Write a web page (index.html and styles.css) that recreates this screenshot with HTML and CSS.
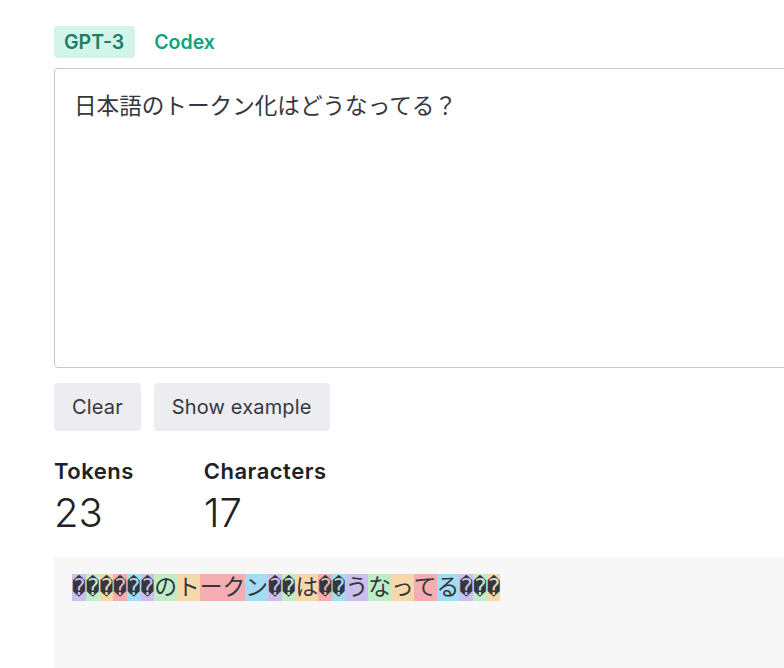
FILE: index.html
```html
<!DOCTYPE html>
<html lang="ja">
<head>
<meta charset="utf-8">
<title>Tokenizer</title>
<link rel="stylesheet" href="styles.css">
</head>
<body>
<div class="page">
  <div class="tabs">
    <span class="tab tab-active">GPT-3</span>
    <span class="tab">Codex</span>
  </div>
  <div class="input">日本語のトークン化はどうなってる？</div>
  <div class="actions">
    <button class="btn">Clear</button>
    <button class="btn">Show example</button>
  </div>
  <div class="stats">
    <div class="stat">
      <div class="stat-label">Tokens</div>
      <div class="stat-value">23</div>
    </div>
    <div class="stat">
      <div class="stat-label">Characters</div>
      <div class="stat-value">17</div>
    </div>
  </div>
  <div class="output"><span class="tk c0">�</span><span class="tk c1">�</span><span class="tk c2">�</span><span class="tk c3">�</span><span class="tk c4">�</span><span class="tk c0">�</span><span class="tk c1">の</span><span class="tk c2">ト</span><span class="tk c3">ーク</span><span class="tk c4">ン</span><span class="tk c0">�</span><span class="tk c1">�</span><span class="tk c2">は</span><span class="tk c3">�</span><span class="tk c4">�</span><span class="tk c0">う</span><span class="tk c1">な</span><span class="tk c2">っ</span><span class="tk c3">て</span><span class="tk c4">る</span><span class="tk c0">�</span><span class="tk c1">�</span><span class="tk c2">�</span></div>
</div>
</body>
</html>
```
FILE: styles.css
```css
html, body {
  margin: 0;
  padding: 0;
  background: #ffffff;
  overflow: hidden;
}
body {
  font-family: Inter, "Noto Sans CJK JP", sans-serif;
  color: #202123;
}
.page {
  padding: 26px 0 0 54px;
  width: 900px;
  height: 642px;
  overflow: hidden;
}
.tabs {
  display: flex;
  align-items: center;
  gap: 9px;
  height: 32px;
}
.tab {
  display: flex;
  align-items: center;
  height: 32px;
  padding: 0 11px 0 10px;
  border-radius: 4px;
  font-size: 19.5px;
  font-weight: 600;
  color: #10a37f;
}
.tab-active {
  background: #d2f4ea;
  color: #1a7f64;
}
.input {
  margin-top: 10px;
  box-sizing: border-box;
  height: 300px;
  border: 1px solid #c5c5d2;
  border-radius: 4px;
  padding: 21px 19px;
  font-family: "Noto Sans CJK JP", sans-serif;
  font-weight: 400;
  font-size: 22.6px;
  line-height: 30px;
  color: #353740;
}
.actions {
  display: flex;
  gap: 13px;
  margin-top: 15px;
}
.btn {
  height: 48px;
  padding: 0 18px;
  border: none;
  border-radius: 4px;
  background: #ececf1;
  color: #353740;
  font-family: Inter, sans-serif;
  font-size: 20px;
  font-weight: 400;
  letter-spacing: 0.15px;
}
.stats {
  display: flex;
  gap: 70px;
  margin-top: 26px;
}
.stat-label {
  font-size: 22px;
  font-weight: 600;
  line-height: 28px;
  letter-spacing: 0.5px;
  color: #202123;
}
.stat-value {
  font-size: 40px;
  font-weight: 300;
  line-height: 46px;
  margin-top: 5px;
  color: #202123;
}
.output {
  margin-top: 21px;
  background: #f7f7f8;
  height: 200px;
  padding: 17px 18px;
  font-family: "DejaVu Sans Mono", "Noto Sans CJK JP", monospace;
  font-size: 22.75px;
  line-height: 27px;
  color: #353740;
}
.tk {
  display: inline-block;
  height: 27px;
  line-height: 27px;
}
.c0 { background: rgba(107, 64, 216, 0.3); }
.c1 { background: rgba(104, 222, 122, 0.4); }
.c2 { background: rgba(244, 172, 54, 0.4); }
.c3 { background: rgba(239, 65, 70, 0.4); }
.c4 { background: rgba(39, 181, 234, 0.4); }
```
